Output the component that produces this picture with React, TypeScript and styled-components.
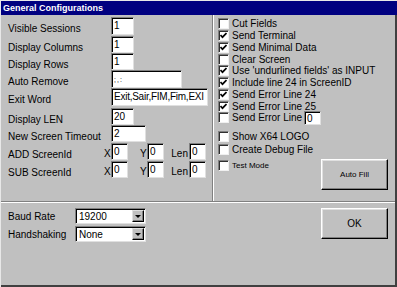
import React from "react";
import styled, { createGlobalStyle } from "styled-components";

const Global = createGlobalStyle`
  html, body { margin: 0; padding: 0; background: #c0c0c0; }
  body { font-family: "Liberation Sans", Arial, sans-serif; }
`;

const Window = styled.div`
  width: 397px;
  height: 287px;
  box-sizing: border-box;
  background: #c0c0c0;
  border-top: 1px solid #e8e8e8;
  border-left: 1px solid #e8e8e8;
  display: flex;
  flex-direction: column;
  font-family: "Liberation Sans", Arial, sans-serif;
  font-size: 10px;
  color: #000;
  overflow: hidden;
`;

const TitleBar = styled.div`
  height: 14px;
  flex: none;
  background: #000080;
  color: #fff;
  font-weight: bold;
  font-size: 9px;
  line-height: 14px;
  padding-left: 2px;
  white-space: nowrap;
`;

const Body = styled.div`
  flex: 1;
  display: flex;
  flex-direction: column;
  border-right: 2px solid #404040;
  border-bottom: 2px solid #404040;
  min-height: 0;
`;

const Top = styled.div`
  height: 186px;
  flex: none;
  display: grid;
  grid-template-columns: 211px 2px 1fr;
`;

const VDivider = styled.div`
  border-left: 1px solid #808080;
  border-right: 1px solid #ffffff;
`;

const HDivider = styled.div`
  height: 0;
  flex: none;
  border-top: 1px solid #808080;
  border-bottom: 1px solid #ffffff;
`;

const LeftPanel = styled.div`
  padding: 2px 0 0 7px;
  display: flex;
  flex-direction: column;
`;

const FieldRow = styled.div<{ $h: number }>`
  height: ${(p) => p.$h}px;
  display: flex;
  align-items: flex-start;
`;

const Label = styled.div<{ $w: number }>`
  width: ${(p) => p.$w}px;
  flex: none;
  margin-top: 5px;
  line-height: 14px;
  white-space: nowrap;
`;

const CoordLabel = styled.div<{ $w: number; $ml?: number }>`
  width: ${(p) => p.$w}px;
  margin-left: ${(p) => p.$ml ?? 0}px;
  flex: none;
  margin-top: 4px;
  line-height: 14px;
  text-align: right;
  padding-right: 1px;
  box-sizing: border-box;
`;

const Edit = styled.div<{ $w: number; $h?: number }>`
  width: ${(p) => p.$w}px;
  height: ${(p) => p.$h ?? 17}px;
  flex: none;
  box-sizing: border-box;
  background: #fff;
  border-top: 1px solid #808080;
  border-left: 1px solid #808080;
  border-right: 1px solid #e0e0e0;
  border-bottom: 1px solid #e0e0e0;
  box-shadow: inset 1px 1px 0 #000;
  padding: 2px 0 0 2px;
  line-height: 11px;
  font-size: 10px;
  white-space: nowrap;
  overflow: hidden;
`;

const TinyText = styled.span`
  font-size: 7px;
  letter-spacing: 1px;
`;

const TightText = styled.span`
  letter-spacing: -0.25px;
`;

const RightPanel = styled.div`
  padding: 3px 7px 0 4px;
  display: flex;
  flex-direction: column;
`;

const CheckRow = styled.div<{ $h: number; $mt?: number; $small?: boolean }>`
  height: ${(p) => p.$h}px;
  margin-top: ${(p) => p.$mt ?? 0}px;
  display: flex;
  align-items: center;
  white-space: nowrap;
  font-size: ${(p) => (p.$small ? 8 : 10)}px;
`;

const Box = styled.div`
  width: 11px;
  height: 11px;
  flex: none;
  box-sizing: border-box;
  background: #fff;
  border-top: 1px solid #808080;
  border-left: 1px solid #808080;
  border-right: 1px solid #f0f0f0;
  border-bottom: 1px solid #f0f0f0;
  box-shadow: inset 1px 1px 0 #303030;
  display: flex;
  align-items: center;
  justify-content: center;
  margin-right: 3px;
`;

const SmallEdit = styled(Edit)`
  margin-left: 2px;
  padding-top: 1px;
`;

const Footer = styled.div`
  display: flex;
  align-items: flex-start;
  margin-top: 3px;
`;

const Button = styled.div<{ $size: number }>`
  width: 67px;
  height: 31px;
  flex: none;
  box-sizing: border-box;
  margin-left: auto;
  border-top: 1px solid #fff;
  border-left: 1px solid #fff;
  border-right: 1px solid #000;
  border-bottom: 1px solid #000;
  box-shadow: inset -1px -1px 0 #808080, inset 1px 1px 0 #e0e0e0;
  display: flex;
  align-items: center;
  justify-content: center;
  font-size: ${(p) => p.$size}px;
  color: #000;
`;

const Bottom = styled.div`
  flex: 1;
  display: flex;
  align-items: flex-start;
  padding: 5px 7px 0 7px;
`;

const SettingsCol = styled.div`
  display: flex;
  flex-direction: column;
  gap: 2px;
`;

const SettingRow = styled.div`
  display: flex;
  align-items: center;
  height: 16px;
`;

const SettingLabel = styled.div`
  width: 67px;
  flex: none;
  padding-top: 1px;
`;

const Combo = styled.div`
  width: 71px;
  height: 16px;
  box-sizing: border-box;
  background: #fff;
  border-top: 1px solid #808080;
  border-left: 1px solid #808080;
  border-right: 1px solid #e0e0e0;
  border-bottom: 1px solid #e0e0e0;
  box-shadow: inset 1px 1px 0 #000;
  display: flex;
  align-items: stretch;
  padding: 1px 1px 1px 2px;
`;

const ComboText = styled.div`
  flex: 1;
  line-height: 13px;
  padding-left: 1px;
`;

const DropButton = styled.div`
  width: 12px;
  flex: none;
  box-sizing: border-box;
  background: #c0c0c0;
  border-top: 1px solid #e0e0e0;
  border-left: 1px solid #e0e0e0;
  border-right: 1px solid #000;
  border-bottom: 1px solid #000;
  box-shadow: inset -1px -1px 0 #808080;
  display: flex;
  align-items: center;
  justify-content: center;
`;

const Arrow = styled.div`
  width: 0;
  height: 0;
  border-left: 3px solid transparent;
  border-right: 3px solid transparent;
  border-top: 3px solid #000;
  margin-top: 1px;
`;

const Check = () => (
  <svg width="7" height="7" viewBox="0 0 7 7">
    <polyline points="0.5,3 2.5,5.2 6.5,1" fill="none" stroke="#000" strokeWidth="1.7" />
  </svg>
);

const CheckItem: React.FC<{ label: string; checked?: boolean; h?: number; mt?: number; small?: boolean; children?: React.ReactNode }> = ({ label, checked, h = 11.75, mt, small, children }) => (
  <CheckRow $h={h} $mt={mt} $small={small}>
    <Box>{checked && <Check />}</Box>
    {label}
    {children}
  </CheckRow>
);

const simpleFields: { label: string; value: React.ReactNode; w: number; h: number; eh?: number }[] = [
  { label: "Visible Sessions", value: "1", w: 23, h: 19, eh: 18 },
  { label: "Display Columns", value: "1", w: 23, h: 17 },
  { label: "Display Rows", value: "1", w: 23, h: 17 },
  { label: "Auto Remove", value: <TinyText>;,:</TinyText>, w: 71, h: 18, eh: 18 },
  { label: "Exit Word", value: <TightText>Exit,Sair,FIM,Fim,EXI</TightText>, w: 97, h: 20, eh: 18 },
  { label: "Display LEN", value: "20", w: 23, h: 17 },
  { label: "New Screen Timeout", value: "2", w: 35, h: 18 },
];

const ScreenIdRow: React.FC<{ label: string }> = ({ label }) => (
  <FieldRow $h={18}>
    <Label $w={96}>{label}</Label>
    <CoordLabel $w={7}>X</CoordLabel>
    <Edit $w={17}>0</Edit>
    <CoordLabel $w={7} $ml={12}>Y</CoordLabel>
    <Edit $w={17}>0</Edit>
    <CoordLabel $w={18} $ml={7}>Len</CoordLabel>
    <Edit $w={17}>0</Edit>
  </FieldRow>
);

export default function App() {
  return (
    <>
      <Global />
      <Window>
        <TitleBar>General Configurations</TitleBar>
        <Body>
          <Top>
            <LeftPanel>
              {simpleFields.map((f) => (
                <FieldRow key={f.label} $h={f.h}>
                  <Label $w={103}>{f.label}</Label>
                  <Edit $w={f.w} $h={f.eh}>{f.value}</Edit>
                </FieldRow>
              ))}
              <ScreenIdRow label="ADD ScreenId" />
              <ScreenIdRow label="SUB ScreenId" />
            </LeftPanel>
            <VDivider />
            <RightPanel>
              <CheckItem label="Cut Fields" />
              <CheckItem label="Send Terminal" checked />
              <CheckItem label="Send Minimal Data" checked />
              <CheckItem label="Clear Screen" />
              <CheckItem label="Use 'undurlined fields' as INPUT" checked />
              <CheckItem label="Include line 24 in ScreenID" checked />
              <CheckItem label="Send Error Line 24" checked />
              <CheckItem label="Send Error Line 25" checked />
              <CheckItem label="Send Error Line">
                <SmallEdit $w={17} $h={14}>0</SmallEdit>
              </CheckItem>
              <CheckItem label="Show X64 LOGO" h={13} mt={6} />
              <CheckItem label="Create Debug File" h={13} />
              <Footer>
                <CheckItem label="Test Mode" small h={12} mt={1} />
                <Button $size={8}>Auto Fill</Button>
              </Footer>
            </RightPanel>
          </Top>
          <HDivider />
          <Bottom>
            <SettingsCol>
              <SettingRow>
                <SettingLabel>Baud Rate</SettingLabel>
                <Combo>
                  <ComboText>19200</ComboText>
                  <DropButton><Arrow /></DropButton>
                </Combo>
              </SettingRow>
              <SettingRow>
                <SettingLabel>Handshaking</SettingLabel>
                <Combo>
                  <ComboText>None</ComboText>
                  <DropButton><Arrow /></DropButton>
                </Combo>
              </SettingRow>
            </SettingsCol>
            <Button $size={10}>OK</Button>
          </Bottom>
        </Body>
      </Window>
    </>
  );
}
